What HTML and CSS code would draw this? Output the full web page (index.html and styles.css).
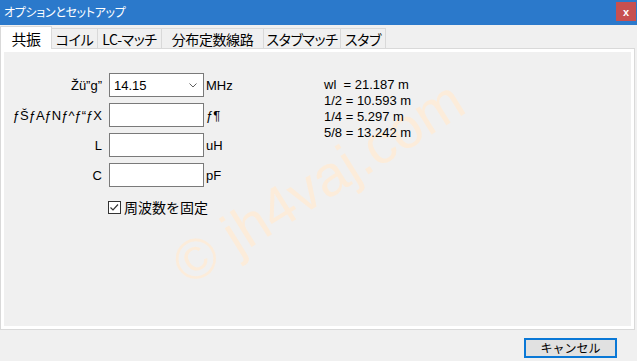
FILE: index.html
```html
<!DOCTYPE html>
<html lang="ja">
<head>
  <meta charset="UTF-8" />
  <title>オプションとセットアップ</title>
  <link rel="stylesheet" href="styles.css">
</head>
<body>
  <div class="window">
    <div class="titlebar">
      <span class="title">オプションとセットアップ</span>
      <span class="close">x</span>
    </div>

    <div class="tabs">
      <div class="tab active">共振</div>
      <div class="tab">コイル</div>
      <div class="tab">LC-マッチ</div>
      <div class="tab">分布定数線路</div>
      <div class="tab">スタブマッチ</div>
      <div class="tab">スタブ</div>
    </div>

    <div class="panel">
      <div class="page">
        <div class="form">
          <span class="label">Žü”g”</span>
          <div class="field combo">
            <span>14.15</span>
            <svg width="8" height="5" viewBox="0 0 8 5"><polyline points="0.5,0.5 4,4 7.5,0.5" fill="none" stroke="#606060" stroke-width="1"/></svg>
          </div>
          <span class="unit">MHz</span>

          <span class="label">ƒŠƒAƒNƒ^ƒ“ƒX</span>
          <div class="field"></div>
          <span class="unit">ƒ¶</span>

          <span class="label">L</span>
          <div class="field"></div>
          <span class="unit">uH</span>

          <span class="label">C</span>
          <div class="field"></div>
          <span class="unit">pF</span>

          <label class="check">
            <svg width="13" height="13" viewBox="0 0 13 13"><rect x="0.5" y="0.5" width="12" height="12" fill="#fff" stroke="#333"/><polyline points="2.5,6.5 5,9 10,3.5" fill="none" stroke="#333" stroke-width="1.2"/></svg>
            <span>周波数を固定</span>
          </label>
        </div>

        <div class="results">
          <div>wl&nbsp; = 21.187 m</div>
          <div>1/2 = 10.593 m</div>
          <div>1/4 = 5.297 m</div>
          <div>5/8 = 13.242 m</div>
        </div>
      </div>
    </div>

    <div class="footer">
      <button class="btn">キャンセル</button>
    </div>

    <div class="watermark">© jh4vaj.com</div>
  </div>
</body>
</html>
```

FILE: styles.css
```css
body {
  margin: 0;
  background: #f0f0f0;
  font-family: "Liberation Sans", Arial, sans-serif;
}
.window {
  position: relative;
  width: 637px;
  height: 361px;
  overflow: hidden;
  background: #f0f0f0;
}
.titlebar {
  height: 25px;
  background: #2b79cb;
  display: flex;
  align-items: center;
  justify-content: space-between;
  padding-left: 4px;
  box-sizing: border-box;
}
.title {
  color: #fff;
  font-family: "Noto Sans CJK JP", sans-serif;
  font-size: 12px;
  font-feature-settings: "palt";
  letter-spacing: -0.3px;
  line-height: 1;
  margin-top: -1px;
}
.close {
  width: 20px;
  height: 19px;
  margin: 0 1px 2px 0;
  background: #c75050;
  color: #fff;
  font-weight: bold;
  font-size: 11px;
  display: flex;
  align-items: center;
  justify-content: center;
}
.tabs {
  display: flex;
  align-items: flex-end;
  height: 23px;
}
.tab {
  position: relative;
  height: 20px;
  box-sizing: border-box;
  border: 1px solid #d9d9d9;
  border-bottom: none;
  margin-left: -1px;
  background: #f0f0f0;
  display: flex;
  align-items: center;
  justify-content: center;
  font-family: "Noto Sans CJK JP", sans-serif;
  font-size: 14px;
  font-feature-settings: "palt";
  letter-spacing: -0.4px;
  white-space: nowrap;
  line-height: 1;
  color: #000;
}
.tab.active {
  margin-left: 0;
  height: 23px;
  margin-bottom: -1px;
  background: #fff;
  z-index: 2;
  padding-top: 1px;
  font-size: 15px;
}
.tab:nth-child(1) { width: 52px; }
.tab:nth-child(2) { width: 47px; }
.tab:nth-child(3) { width: 65px; }
.tab:nth-child(4) { width: 103px; }
.tab:nth-child(5) { width: 78px; }
.tab:nth-child(6) { width: 46px; }

.panel {
  width: 635px;
  height: 282px;
  box-sizing: border-box;
  border: 1px solid #d9d9d9;
  background: #fff;
  padding: 3px;
}
.page {
  height: 100%;
  background: #f0f0f0;
  display: flex;
}
.form {
  width: 320px;
  padding-top: 21px;
  display: grid;
  grid-template-columns: 105px 95px auto;
  grid-auto-rows: 24px;
  row-gap: 6px;
  align-content: start;
  font-size: 13px;
}
.label {
  padding-right: 7px;
  text-align: right;
  align-self: center;
  white-space: nowrap;
}
.unit {
  padding-left: 2px;
  align-self: center;
}
.field {
  box-sizing: border-box;
  border: 1px solid #7a7a7a;
  background: #fff;
}
.combo {
  display: flex;
  align-items: center;
  justify-content: space-between;
  padding: 0 6px 0 4px;
}
.check {
  grid-column: 2 / 4;
  margin: 4px 0 0 -1px;
  display: flex;
  align-items: center;
  gap: 3px;
  font-family: "Noto Sans CJK JP", sans-serif;
  font-size: 14px;
  line-height: 1;
}
.check svg {
  flex: none;
}
.results {
  position: relative;
  z-index: 1;
  padding-top: 25px;
  font-size: 13px;
  line-height: 16px;
  white-space: nowrap;
}
.footer {
  display: flex;
  justify-content: flex-end;
  padding: 8px 20px 0 0;
}
.btn {
  width: 93px;
  height: 20px;
  box-sizing: border-box;
  border: 2px solid #0a78d6;
  background: #e1e1e1;
  padding: 0;
  font-family: "Noto Sans CJK JP", sans-serif;
  font-size: 12px;
  line-height: 1;
  color: #000;
}
.watermark {
  position: absolute;
  left: 318px;
  top: 182px;
  transform: translate(-50%, -50%) rotate(-32deg);
  font-size: 57px;
  color: #fcecda;
  white-space: nowrap;
  z-index: 0;
  pointer-events: none;
}
```
